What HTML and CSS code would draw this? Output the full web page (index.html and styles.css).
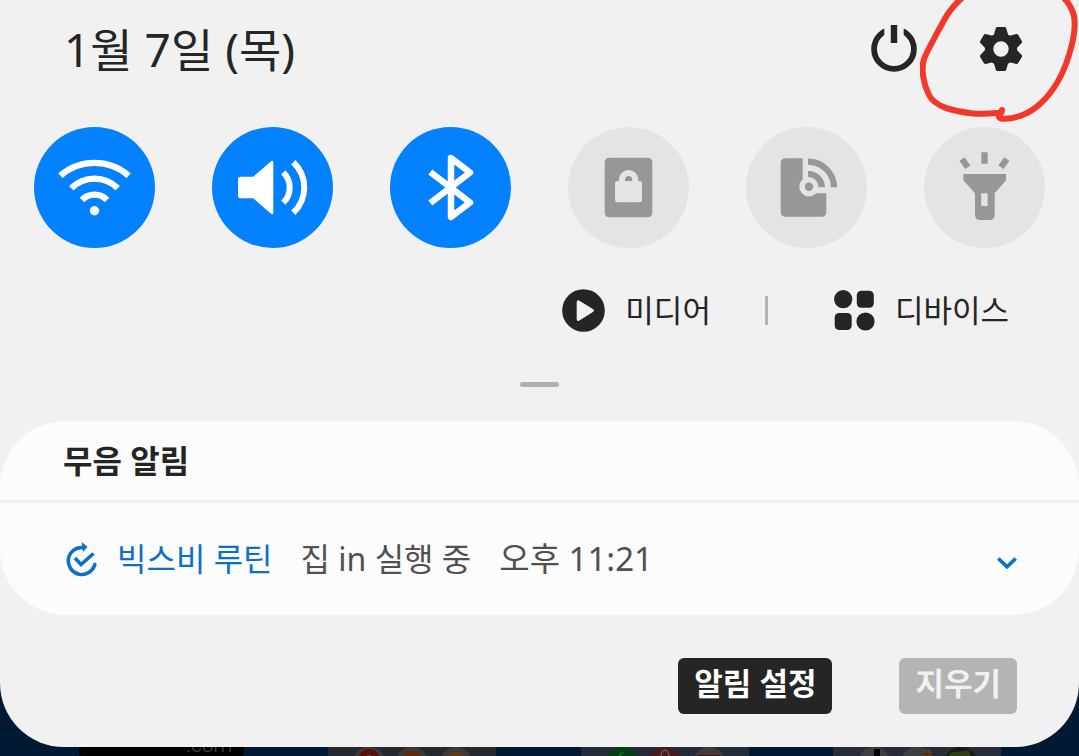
FILE: index.html
```html
<!DOCTYPE html>
<html lang="ko">
<head>
  <meta charset="UTF-8">
  <meta name="viewport" content="width=device-width, initial-scale=1.0">
  <title>알림창</title>
  <link rel="stylesheet" href="styles.css">
</head>
<body>
  <main class="panel">
    <!-- Date and system buttons -->
    <header class="panel-header">
      <h1 class="date">1월 7일 (목)</h1>
      <div class="system-buttons">
        <button class="icon-button" type="button" aria-label="전원">
          <svg width="46" height="47" viewBox="0 0 46 47">
            <circle cx="23" cy="24" r="19.9" fill="none" stroke="#252525" stroke-width="5.8"/>
            <rect x="13.3" y="0" width="19.4" height="14" fill="#f1f1f1"/>
            <rect x="19.8" y="0" width="6.4" height="18" fill="#252525"/>
          </svg>
        </button>
        <button class="icon-button" type="button" aria-label="설정">
          <svg width="44" height="44" viewBox="-22 -22 44 44">
            <defs>
              <path id="tooth" d="M-7.5-13 L-5.2-20.8 Q-4.8-22-3.6-22 H3.6 Q4.8-22 5.2-20.8 L7.5-13Z"/>
            </defs>
            <circle r="11.9" fill="none" stroke="#252525" stroke-width="8.4"/>
            <g fill="#252525">
              <use href="#tooth"/>
              <use href="#tooth" transform="rotate(60)"/>
              <use href="#tooth" transform="rotate(120)"/>
              <use href="#tooth" transform="rotate(180)"/>
              <use href="#tooth" transform="rotate(240)"/>
              <use href="#tooth" transform="rotate(300)"/>
            </g>
          </svg>
        </button>
      </div>
    </header>

    <!-- Pen mark around the settings button -->
    <svg class="pen-mark" width="159" height="124" viewBox="0 0 159 124" aria-hidden="true">
      <path d="M43-3 C28 10 24 21 17 33 C12 43 7 51 4 59 C1 69 3 83 9 95 C15 107 33 111 53 113.500 C62 114.500 70 113 77 113 C80 113 82 112 82 110 C82 114 76 117 81 118.500 C94 120 109 114 120 104 C132 93 143 75 149 55 C154 39 156 27 154 16 C152 8 149 3 143-3"/>
    </svg>

    <!-- Quick settings -->
    <section class="toggles" aria-label="빠른 설정">
      <button class="toggle on" type="button" aria-label="Wi-Fi" aria-pressed="true">
        <svg viewBox="0 0 121 121" fill="none" stroke="#fff" stroke-width="6.300">
          <path d="M26.300 48.700A51.800 51.800 0 0 1 94.700 48.700M37.300 61.300A32.800 32.800 0 0 1 83.700 61.300M48 73A17.400 17.400 0 0 1 73 73"/>
          <circle cx="60.500" cy="83.700" r="4.700" fill="#fff" stroke="none"/>
        </svg>
      </button>
      <button class="toggle on" type="button" aria-label="소리" aria-pressed="true">
        <svg viewBox="0 0 121 121" fill="none" stroke="#fff" stroke-width="6">
          <path d="M28.500 49.700H41.300L59 34.200Q61.300 32.700 61.300 35.500V85.500Q61.300 88.300 59 86.800L41.300 71.300H28.500Q26 71.300 26 68.800V52.200Q26 49.700 28.500 49.700Z" fill="#fff" stroke="none"/>
          <path d="M71.300 45.300A21.200 21.200 0 0 1 71.300 75.700M81.300 35.300A34.500 34.500 0 0 1 81.300 85.700"/>
        </svg>
      </button>
      <button class="toggle on" type="button" aria-label="블루투스" aria-pressed="true">
        <svg viewBox="0 0 121 121" fill="none" stroke="#fff" stroke-width="6.500" stroke-linejoin="round">
          <path d="M40.300 45L80 75.500L61 90V31L80 45.500L40.300 76"/>
        </svg>
      </button>
      <button class="toggle" type="button" aria-label="화면 잠금" aria-pressed="false">
        <svg viewBox="0 0 121 121">
          <rect x="36.700" y="30.700" width="47.600" height="59.600" rx="4.500" fill="#979797"/>
          <rect x="47" y="54" width="27" height="21.300" rx="2.500" fill="#e4e4e4"/>
          <path d="M54 56V52.500a6.600 6.600 0 0 1 13.200 0V56" fill="none" stroke="#e4e4e4" stroke-width="6"/>
        </svg>
      </button>
      <button class="toggle" type="button" aria-label="휴대전화 공유" aria-pressed="false">
        <svg viewBox="0 0 121 121">
          <path d="M39.700 31.300H56.700V66.300H80.300V84.700Q80.300 89.700 75.300 89.700H39.700Q34.700 89.700 34.700 84.700V36.300Q34.700 31.300 39.700 31.300Z" fill="#979797"/>
          <circle cx="63" cy="59.700" r="9.700" fill="#e4e4e4"/>
          <circle cx="63" cy="59.700" r="4.200" fill="#979797"/>
          <path d="M62 47A13.500 13.500 0 0 1 75.800 60.300M62 34.700A25.800 25.800 0 0 1 88 60.300" fill="none" stroke="#979797" stroke-width="6.200"/>
        </svg>
      </button>
      <button class="toggle" type="button" aria-label="손전등" aria-pressed="false">
        <svg viewBox="0 0 121 121">
          <path d="M39.300 47H82V53.300L70.700 66.300V87.500Q70.700 93 65.200 93H56.600Q51 93 51 87.500V66.300L39.300 53.300Z" fill="#979797"/>
          <rect x="57.200" y="66.300" width="6.400" height="12.700" fill="#e4e4e4"/>
          <path d="M60.500 25.300V36.700M38 32L43.800 40.300M82.800 32L77 40.300" fill="none" stroke="#979797" stroke-width="6.300"/>
        </svg>
      </button>
    </section>

    <!-- Media and devices -->
    <nav class="shortcuts">
      <button class="shortcut" type="button">
        <svg width="43" height="43" viewBox="0 0 43 43">
          <circle cx="21.500" cy="21.500" r="21.300" fill="#252525"/>
          <path d="M16.200 12.700L30.500 21.500L16.200 30.500Z" fill="#f1f1f1" stroke="#f1f1f1" stroke-width="3" stroke-linejoin="round"/>
        </svg>
        <span class="shortcut-label">미디어</span>
      </button>
      <span class="separator"></span>
      <button class="shortcut" type="button">
        <svg width="41" height="41" viewBox="0 0 41 41" fill="#252525">
          <circle cx="9.200" cy="9.200" r="9.100"/>
          <rect x="22.800" y=".7" width="17" height="17" rx="4.500"/>
          <rect x=".7" y="23" width="17" height="17" rx="4.500"/>
          <circle cx="31.500" cy="31.500" r="9.100"/>
        </svg>
        <span class="shortcut-label">디바이스</span>
      </button>
    </nav>

    <div class="handle"></div>

    <!-- Silent notifications -->
    <section class="card">
      <h2 class="card-title">무음 알림</h2>
      <div class="notification">
        <svg width="32" height="35" viewBox="0 0 32 35" fill="none" stroke="#0f6fc6" stroke-width="3.600" stroke-linecap="round">
          <path d="M17 5.500A13.500 13.500 0 1 0 28.800 22.500"/>
          <path d="M9 16L15 22.500L27.500 11.500" stroke-linecap="butt"/>
          <path d="M15.700 0L21.600 5L17 10Z" fill="#0f6fc6" stroke="none"/>
        </svg>
        <span class="app-name">빅스비 루틴</span>
        <span class="message">집 in 실행 중</span>
        <time class="time" datetime="23:21">오후 11:21</time>
        <button class="icon-button expand" type="button" aria-label="펼치기">
          <svg width="20" height="13" viewBox="0 0 20 13" fill="none" stroke="#0f6fc6" stroke-width="3.600">
            <path d="M1.300 1.500L10 9.800L18.700 1.500"/>
          </svg>
        </button>
      </div>
    </section>

    <footer class="actions">
      <button class="action" type="button">알림 설정</button>
      <button class="action muted" type="button">지우기</button>
    </footer>
  </main>

  <!-- Dimmed home screen behind the panel -->
  <div class="home" aria-hidden="true">
    <svg class="home-item" width="165" height="40" viewBox="0 0 165 40">
      <rect y="-20" width="165" height="29" rx="4" fill="#000"/>
      <text class="home-text" x="107" y="5">.com</text>
    </svg>
    <svg class="home-item" width="168" height="40" viewBox="0 0 168 40">
      <rect width="168" height="40" fill="#23292f"/>
      <g fill="#3a3a3c">
        <circle cx="41" cy="17" r="17"/>
        <circle cx="84" cy="17" r="17"/>
        <circle cx="128" cy="17" r="17"/>
      </g>
      <circle cx="41" cy="13" r="11" fill="#5a0f0b"/>
      <circle cx="41" cy="11" r="3" fill="#555"/>
      <path d="M75 9L79 4H89L93 9V20H75Z" fill="#61290d"/>
      <path d="M118 9L128 4L138 9V20H118Z" fill="#613a0d"/>
    </svg>
    <svg class="home-item" width="168" height="40" viewBox="0 0 168 40">
      <rect width="168" height="40" fill="#232b39"/>
      <circle cx="41" cy="17" r="17" fill="#053d15"/>
      <path d="M38 9Q39 6 43 5" fill="none" stroke="#0b6428" stroke-width="2"/>
      <circle cx="84" cy="17" r="17" fill="#4b1a1f"/>
      <path d="M79 11Q81 3 84 3Q87 3 89 11" fill="none" stroke="#777" stroke-width="1"/>
      <circle cx="128" cy="17" r="17" fill="#3c3c40"/>
      <rect x="117" y="8" width="22" height="10" fill="#4c0c0c"/>
    </svg>
    <svg class="home-item" width="168" height="40" viewBox="0 0 168 40">
      <rect width="168" height="40" fill="#262c38"/>
      <g fill="#3c3e43">
        <circle cx="41" cy="17" r="17"/>
        <circle cx="84" cy="17" r="17"/>
      </g>
      <rect x="41" y="2" width="6" height="12" fill="#000"/>
      <circle cx="94" cy="7" r="5" fill="#6b3a0f"/>
      <path d="M89 7H99M94 2V12" stroke="#262c38" stroke-width="1"/>
      <circle cx="128" cy="17" r="17" fill="#17191a"/>
      <path d="M117 6L136 3L139 12H115Z" fill="#2e3d16"/>
    </svg>
  </div>
</body>
</html>
```
FILE: styles.css
```css
/* General Styles */
* {
  box-sizing: border-box;
}

body {
  margin: 0;
  height: 100vh;
  display: flex;
  flex-direction: column;
  overflow: hidden;
  background: #001a33;
  color: #252525;
  font-family: "Noto Sans", "Noto Sans CJK KR", sans-serif;
  font-size: 32px;
  line-height: 48px;
}

button {
  padding: 0;
  border: none;
  background: none;
  color: inherit;
  font: inherit;
  cursor: pointer;
}

svg {
  display: block;
  flex: none;
}

/* Panel */
.panel {
  position: relative;
  flex: none;
  background: #f1f1f1;
  border-radius: 0 0 64px 64px;
}

.panel-header {
  display: flex;
  justify-content: space-between;
  align-items: center;
  height: 97px;
  padding: 0 56px 0 64px;
}

.date {
  margin: 0;
  font-size: 46px;
  font-weight: 400;
}

.system-buttons {
  display: flex;
  align-items: center;
  gap: 62px;
}

.pen-mark {
  position: absolute;
  top: 0;
  right: 0;
  pointer-events: none;
}

.pen-mark path {
  fill: none;
  stroke: #f2382b;
  stroke-width: 6px;
  stroke-linecap: round;
  stroke-linejoin: round;
}

/* Quick Settings */
.toggles {
  display: flex;
  justify-content: space-between;
  padding: 30px 34px 0;
}

.toggle {
  width: 121px;
  height: 121px;
  border-radius: 50%;
  background: #e4e4e4;
}

.toggle.on {
  background: #0381fe;
}

/* Shortcuts */
.shortcuts {
  display: flex;
  justify-content: flex-end;
  align-items: center;
  padding: 38px 70px 0 0;
}

.shortcut {
  display: flex;
  align-items: center;
  gap: 20px;
}

.shortcut-label {
  font-size: 31px;
}

.separator {
  width: 3px;
  height: 29px;
  margin: 0 66px 0 54px;
  background: #b3b3b3;
}

.handle {
  width: 39px;
  height: 5px;
  margin: 48px auto 34px;
  border-radius: 3px;
  background: #b0b0b0;
}

/* Notification Card */
.card {
  border-radius: 66px;
  background: #fcfcfc;
}

.card-title {
  margin: 0;
  padding: 16px 63px 15px;
  border-bottom: 3px solid #f1f1f1;
  font-size: 32px;
  font-weight: 700;
}

.notification {
  display: flex;
  align-items: center;
  height: 112px;
  padding: 0 62px 0 66px;
}

.app-name {
  margin-left: 19px;
  color: #0f6fc6;
}

.message,
.time {
  margin-left: 28px;
  color: #505050;
}

.time {
  font-size: 33px;
}

.expand {
  margin-left: auto;
  padding-top: 8px;
}

/* Footer Buttons */
.actions {
  display: flex;
  justify-content: flex-end;
  gap: 67px;
  padding: 43px 62px 33px;
}

.action {
  height: 56px;
  padding: 0 16px 6px;
  border-radius: 6px;
  background: #252525;
  color: #fff;
  font-size: 31px;
  font-weight: 700;
}

.action.muted {
  background: #b4b4b4;
  color: #f1f1f1;
}

/* Home Screen */
.home {
  flex: 1;
  min-height: 0;
  display: flex;
  justify-content: space-between;
  padding: 0 78px 0 79px;
  overflow: hidden;
}

.home-text {
  fill: #4a4a4a;
  font-family: Roboto, sans-serif;
  font-size: 21px;
  font-weight: 300;
}
```
